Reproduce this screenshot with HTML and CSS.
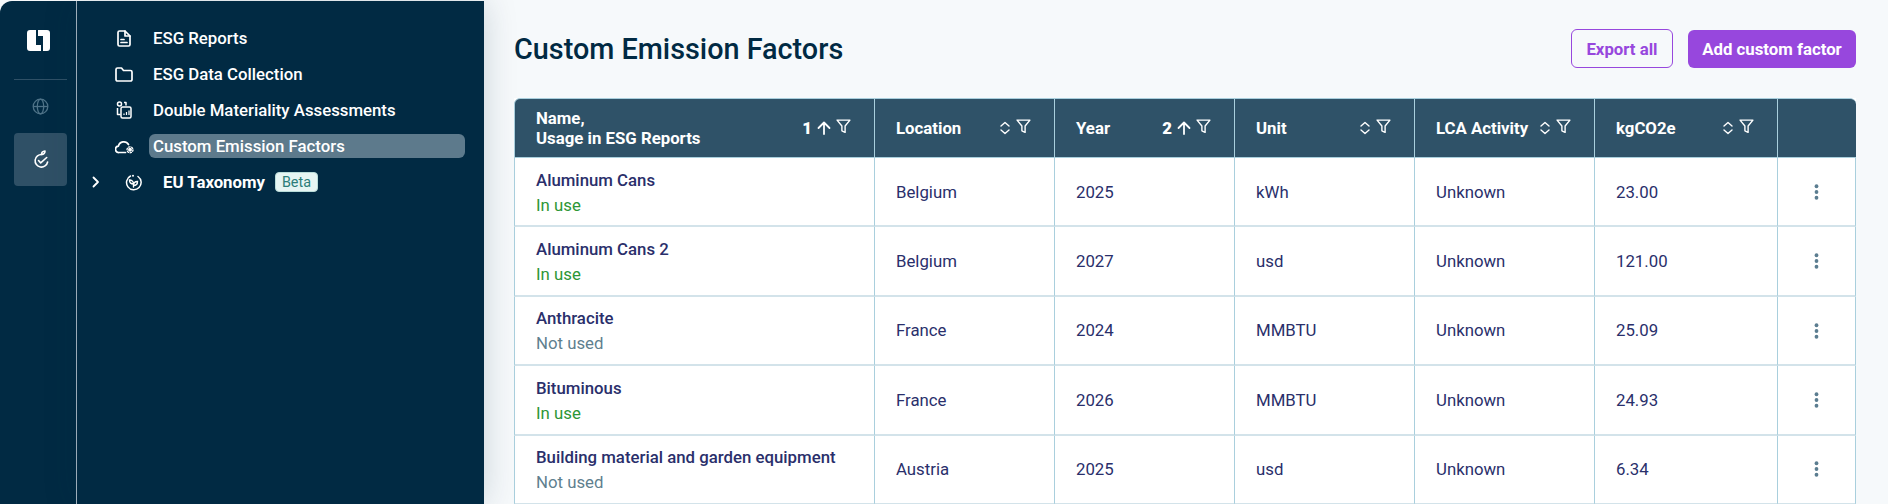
FILE: index.html
```html
<!DOCTYPE html>
<html lang="en">
<head>
    <meta charset="UTF-8">
    <title>Custom Emission Factors</title>
    <link rel="stylesheet" href="styles.css">
</head>
<body>
    <div class="app">
        <aside class="rail">
            <div class="rail-logo">
                <svg width="23" height="21" viewBox="0 0 23 21" fill="#fff"><path d="M0 3a3 3 0 0 1 3-3h6v15h5v6H3a3 3 0 0 1-3-3z"/><path d="M11 0h9a3 3 0 0 1 3 3v15a3 3 0 0 1-3 3h-4V6h-5z"/></svg>
            </div>
            <div class="rail-item">
                <svg width="17" height="17" viewBox="0 0 17 17" fill="none" stroke="#4f7388" stroke-width="1.3"><circle cx="8.5" cy="8.5" r="7.3"/><ellipse cx="8.5" cy="8.5" rx="3.2" ry="7.3"/><path d="M1.2 8.5h14.6"/></svg>
            </div>
            <div class="rail-item rail-active">
                <svg width="16" height="19" viewBox="0 0 16 19" fill="none" stroke="#fff" stroke-width="1.6" stroke-linecap="round" stroke-linejoin="round"><path d="M9 4.500A6.300 6.300 0 1 0 14.600 12"/><path d="M5.500 10.500l2.200 2.400 6-5.400"/><path d="M8.500 4.500c0-2 1.300-3.300 3.500-3.500 0 2-1.300 3.300-3.500 3.500z"/></svg>
            </div>
        </aside>

        <nav class="nav">
            <a class="nav-item">
                <span class="nav-icon"><svg width="14" height="17" viewBox="0 0 14 17" fill="none" stroke="#fff" stroke-width="1.7" stroke-linejoin="round" stroke-linecap="round"><path d="M2.500 1h5.500l5 5v8.500a1.500 1.500 0 0 1-1.500 1.500h-9A1.500 1.500 0 0 1 1 14.500v-12A1.500 1.500 0 0 1 2.500 1z"/><path d="M8 1v5h5M4 9.500h3M4 12.500h6"/></svg></span>
                <span class="nav-label">ESG Reports</span>
            </a>
            <a class="nav-item">
                <span class="nav-icon"><svg width="18" height="15" viewBox="0 0 18 15" fill="none" stroke="#fff" stroke-width="1.7" stroke-linejoin="round"><path d="M1 2.500A1.500 1.500 0 0 1 2.500 1h4l2 2.500h7A1.500 1.500 0 0 1 17 5v7.500a1.500 1.500 0 0 1-1.500 1.500h-13A1.500 1.500 0 0 1 1 12.500z"/></svg></span>
                <span class="nav-label">ESG Data Collection</span>
            </a>
            <a class="nav-item">
                <span class="nav-icon"><svg width="16" height="18" viewBox="0 0 16 18" fill="none" stroke="#fff" stroke-width="1.5" stroke-linejoin="round"><circle cx="3.500" cy="3" r="2"/><path d="M8 1.500h2v3M1.500 7v6.500h3"/><rect x="5" y="6" width="10" height="11" rx="1.500"/><path d="M8 14v-1.500M10.500 14v-3M13 14v-4.500" stroke-width="1.200"/></svg></span>
                <span class="nav-label">Double Materiality Assessments</span>
            </a>
            <a class="nav-item nav-current">
                <span class="nav-icon"><svg width="19" height="15" viewBox="0 0 19 15" fill="none" stroke="#fff" stroke-width="1.7" stroke-linecap="round" stroke-linejoin="round"><path d="M10.500 13.500H4a3.200 3.200 0 0 1-.6-6.400A5.500 5.500 0 0 1 13.500 5.500"/><circle cx="15" cy="10.800" r="2" fill="#fff" stroke="none"/><circle cx="15" cy="10.800" r="3" stroke-width="1.300" stroke-dasharray="1.500 1.600"/></svg></span>
                <span class="nav-label">Custom Emission Factors</span>
            </a>
            <a class="nav-item nav-group">
                <svg class="nav-chevron" width="8" height="12" viewBox="0 0 8 12" fill="none" stroke="#fff" stroke-width="1.800" stroke-linecap="round" stroke-linejoin="round"><path d="M1.500 1.500L6 6l-4.500 4.500"/></svg>
                <span class="nav-icon"><svg width="17" height="17" viewBox="0 0 17 17" fill="none" stroke="#fff" stroke-width="1.500" stroke-linecap="round"><path d="M5.500 2A7.300 7.300 0 1 0 13 2.500"/><circle cx="8" cy="1.700" r="1" fill="#fff" stroke="none"/><path d="M8.500 13V9M8.500 10C8.500 7.500 6.500 6 4.500 6c0 2.500 1.800 4 4 4zM8.500 11.500c0-2.500 1.800-4 4-4 0 2.500-1.800 4-4 4z" stroke-width="1.400"/></svg></span>
                <span class="nav-label nav-label-strong">EU Taxonomy</span>
                <span class="beta">Beta</span>
            </a>
        </nav>

        <main class="main">
            <header class="page-head">
                <h1>Custom Emission Factors</h1>
                <div class="actions">
                    <button class="btn btn-outline">Export all</button>
                    <button class="btn btn-solid">Add custom factor</button>
                </div>
            </header>

            <table class="factors">
                <colgroup>
                    <col class="col-name"><col class="col-std"><col class="col-std"><col class="col-std"><col class="col-std"><col class="col-kg"><col>
                </colgroup>
                <thead>
                    <tr>
                        <th><div class="th-inner"><span>Name,<br>Usage in ESG Reports</span><span class="th-tools"><b>1</b><svg class="ic-up" width="14" height="14" viewBox="0 0 14 14"><use href="#up"/></svg><svg class="ic-filter" width="15" height="15" viewBox="0 0 14 14"><use href="#filter"/></svg></span></div></th>
                        <th><div class="th-inner"><span>Location</span><span class="th-tools"><svg width="12" height="14" viewBox="0 0 12 14"><use href="#sort"/></svg><svg class="ic-filter" width="15" height="15" viewBox="0 0 14 14"><use href="#filter"/></svg></span></div></th>
                        <th><div class="th-inner"><span>Year</span><span class="th-tools"><b>2</b><svg class="ic-up" width="14" height="14" viewBox="0 0 14 14"><use href="#up"/></svg><svg class="ic-filter" width="15" height="15" viewBox="0 0 14 14"><use href="#filter"/></svg></span></div></th>
                        <th><div class="th-inner"><span>Unit</span><span class="th-tools"><svg width="12" height="14" viewBox="0 0 12 14"><use href="#sort"/></svg><svg class="ic-filter" width="15" height="15" viewBox="0 0 14 14"><use href="#filter"/></svg></span></div></th>
                        <th><div class="th-inner"><span>LCA Activity</span><span class="th-tools"><svg width="12" height="14" viewBox="0 0 12 14"><use href="#sort"/></svg><svg class="ic-filter" width="15" height="15" viewBox="0 0 14 14"><use href="#filter"/></svg></span></div></th>
                        <th><div class="th-inner"><span>kgCO2e</span><span class="th-tools"><svg width="12" height="14" viewBox="0 0 12 14"><use href="#sort"/></svg><svg class="ic-filter" width="15" height="15" viewBox="0 0 14 14"><use href="#filter"/></svg></span></div></th>
                        <th></th>
                    </tr>
                </thead>
                <tbody>
                    <tr>
                        <td class="cell-name"><div class="name">Aluminum Cans</div><div class="used">In use</div></td>
                        <td>Belgium</td><td>2025</td><td>kWh</td><td>Unknown</td><td>23.00</td>
                        <td class="more"><svg width="5" height="16" viewBox="0 0 4 14"><use href="#dots"/></svg></td>
                    </tr>
                    <tr>
                        <td class="cell-name"><div class="name">Aluminum Cans 2</div><div class="used">In use</div></td>
                        <td>Belgium</td><td>2027</td><td>usd</td><td>Unknown</td><td>121.00</td>
                        <td class="more"><svg width="5" height="16" viewBox="0 0 4 14"><use href="#dots"/></svg></td>
                    </tr>
                    <tr>
                        <td class="cell-name"><div class="name">Anthracite</div><div class="unused">Not used</div></td>
                        <td>France</td><td>2024</td><td>MMBTU</td><td>Unknown</td><td>25.09</td>
                        <td class="more"><svg width="5" height="16" viewBox="0 0 4 14"><use href="#dots"/></svg></td>
                    </tr>
                    <tr>
                        <td class="cell-name"><div class="name">Bituminous</div><div class="used">In use</div></td>
                        <td>France</td><td>2026</td><td>MMBTU</td><td>Unknown</td><td>24.93</td>
                        <td class="more"><svg width="5" height="16" viewBox="0 0 4 14"><use href="#dots"/></svg></td>
                    </tr>
                    <tr>
                        <td class="cell-name"><div class="name">Building material and garden equipment</div><div class="unused">Not used</div></td>
                        <td>Austria</td><td>2025</td><td>usd</td><td>Unknown</td><td>6.34</td>
                        <td class="more"><svg width="5" height="16" viewBox="0 0 4 14"><use href="#dots"/></svg></td>
                    </tr>
                </tbody>
            </table>
        </main>
    </div>

    <svg class="defs" width="0" height="0">
        <symbol id="up" viewBox="0 0 14 14"><path d="M7 13V1.500M1.500 7L7 1.500 12.500 7" fill="none" stroke="#fff" stroke-width="1.800" stroke-linecap="round" stroke-linejoin="round"/></symbol>
        <symbol id="filter" viewBox="0 0 14 14"><path d="M1 1h12L8.500 6.500V12.500L5.500 11V6.500z" fill="none" stroke="#fff" stroke-width="1.300" stroke-linejoin="round"/></symbol>
        <symbol id="sort" viewBox="0 0 12 14"><path d="M2 5l4-3.500L10 5M2 9l4 3.500L10 9" fill="none" stroke="#fff" stroke-width="1.400" stroke-linecap="round" stroke-linejoin="round"/></symbol>
        <symbol id="dots" viewBox="0 0 4 14"><circle cx="2" cy="2" r="1.700" fill="#5b7d90"/><circle cx="2" cy="7" r="1.700" fill="#5b7d90"/><circle cx="2" cy="12" r="1.700" fill="#5b7d90"/></symbol>
    </svg>
</body>
</html>
```

FILE: styles.css
```css
* {
    box-sizing: border-box;
}

html, body {
    height: 100%;
    margin: 0;
    overflow: hidden;
    background-color: #f6f9fb;
    font-family: Roboto, "Liberation Sans", sans-serif;
    font-size: 16.8px;
}

.app {
    display: flex;
    height: 504px;
    padding-top: 1px;
}

.defs {
    position: absolute;
}

/* left icon rail */
.rail {
    flex: 0 0 77px;
    padding: 0 9px 0 14px;
    background-color: #012a43;
    border-right: 1px solid #a9b8c4;
    border-top-left-radius: 12px;
    display: flex;
    flex-direction: column;
    align-items: stretch;
}

.rail-logo {
    height: 79px;
    padding: 29px 0 0 13px;
    border-bottom: 1px solid #2f5066;
}

.rail-item {
    height: 53px;
    display: flex;
    align-items: center;
    justify-content: center;
}

.rail-active {
    background-color: #2f5066;
    border-radius: 4px;
}

/* second column */
.nav {
    flex: 0 0 407px;
    padding: 19px 19px 0 0;
    background-color: #012a43;
    box-shadow: 0 0 32px rgba(1, 42, 67, 0.18);
    z-index: 1;
    display: flex;
    flex-direction: column;
}

.nav-item {
    height: 36px;
    display: flex;
    align-items: center;
    color: #fff;
    font-weight: 500;
    font-size: 16.8px;
}

.nav-icon {
    flex: 0 0 72px;
    display: flex;
    justify-content: center;
    padding-left: 22px;
}

.nav-label {
    flex: 1;
    height: 24px;
    line-height: 24px;
    padding-left: 4px;
    border-radius: 6px;
}

.nav-current .nav-label {
    background-color: #5d7a8c;
}

.nav-group {
    padding-left: 15px;
}

.nav-group .nav-icon {
    flex: 0 0 50px;
    padding-left: 16px;
}

.nav-chevron {
    flex: none;
}

.nav-label-strong {
    flex: none;
    font-weight: 700;
    padding-left: 0;
    margin-left: 13px;
}

.beta {
    margin-left: 10px;
    width: 43px;
    height: 20px;
    line-height: 19px;
    text-align: center;
    font-size: 14.4px;
    font-weight: 400;
    color: #2c7d79;
    background-color: #e6f5f3;
    border: 1px solid #b9dcd9;
    border-radius: 4px;
}

/* main content */
.main {
    flex: 1;
    min-width: 0;
    padding: 28px 32px 0 30px;
}

.page-head {
    display: flex;
    align-items: center;
    justify-content: space-between;
    height: 39px;
    margin-bottom: 30px;
}

.page-head h1 {
    margin: 0;
    font-size: 28.8px;
    font-weight: 500;
    color: #012a43;
}

.actions {
    display: flex;
    gap: 15px;
    align-items: center;
}

.btn {
    font-family: inherit;
    font-size: 16.8px;
    font-weight: 700;
    border-radius: 6px;
    padding: 0;
}

.btn-outline {
    width: 102px;
    height: 39px;
    color: #9747dd;
    background-color: transparent;
    border: 1px solid #9747dd;
}

.btn-solid {
    width: 168px;
    height: 38px;
    color: #fff;
    background-color: #9747dd;
    border: 0;
}

/* table */
.factors {
    width: 1342px;
    table-layout: fixed;
    border-collapse: separate;
    border-spacing: 0;
    background-color: #fff;
    color: #2a2f6b;
}

.col-name { width: 361px; }
.col-std { width: 180px; }
.col-kg { width: 183px; }

.factors th {
    height: 60px;
    padding: 0 23px 0 21px;
    background-color: #2f5268;
    color: #fff;
    font-weight: 700;
    text-align: left;
    line-height: 20px;
    border-right: 1px solid #a9cfdd;
    border-top: 1px solid #a9cfdd;
    border-bottom: 1px solid #a9cfdd;
}

.factors th:first-child {
    border-top-left-radius: 6px;
    border-left: 1px solid #a9cfdd;
}

.factors th:last-child {
    border-top-right-radius: 6px;
    border-right: 0;
}

.th-inner {
    display: flex;
    align-items: center;
    justify-content: space-between;
}

.th-tools {
    display: flex;
    align-items: center;
    gap: 5px;
    flex: none;
}

.ic-filter {
    margin-top: -3px;
}

.factors td {
    height: 69.4px;
    padding: 0 20px 0 21px;
    border-right: 1px solid #a9cfdd;
    border-bottom: 2px solid #d3e3ea;
}

.factors td:first-child {
    border-left: 1px solid #a9cfdd;
}

.factors td.cell-name {
    padding-top: 2px;
}

.name {
    font-weight: 500;
    line-height: 25px;
}

.used, .unused {
    line-height: 25px;
}

.used { color: #2d9636; }
.unused { color: #5f7f8f; }

.factors td.more {
    padding: 0 0 3px;
    text-align: center;
}

.more svg {
    vertical-align: middle;
}
```
